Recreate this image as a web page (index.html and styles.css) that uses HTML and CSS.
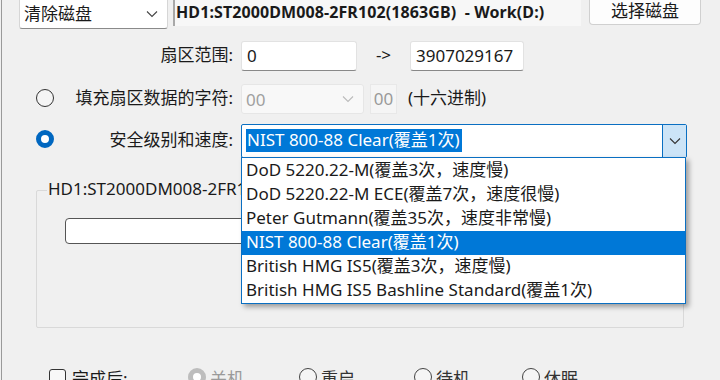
FILE: index.html
```html
<!DOCTYPE html>
<html lang="zh">
<head>
<meta charset="utf-8">
<link rel="stylesheet" href="styles.css">
</head>
<body>
<div class="win">
  <div class="row1">
    <div class="combo top-combo"><span>清除磁盘</span>
      <svg class="chev" width="12" height="8" viewBox="0 0 12 8"><polyline points="1,1.5 6,6.5 11,1.5" fill="none" stroke="#444" stroke-width="1.1"/></svg>
    </div>
    <div class="diskinfo">HD1:ST2000DM008-2FR102(1863GB) &nbsp;- Work(D:)</div>
    <div class="btn">选择磁盘</div>
  </div>

  <div class="row row2">
    <div class="lbl">扇区范围:</div>
    <div class="field f1">0</div>
    <div class="arrow">-&gt;</div>
    <div class="field f2">3907029167</div>
  </div>

  <div class="row row3">
    <div class="radio-cell"><span class="radio"></span></div>
    <div class="lbl lbl-narrow">填充扇区数据的字符:</div>
    <div class="combo dis-combo"><span>00</span>
      <svg class="chev" width="12" height="8" viewBox="0 0 12 8"><polyline points="1,1.5 6,6.5 11,1.5" fill="none" stroke="#bbb" stroke-width="1.1"/></svg>
    </div>
    <div class="dis-box">00</div>
    <div class="hex">(十六进制)</div>
  </div>

  <div class="row row4">
    <div class="radio-cell"><span class="radio on"></span></div>
    <div class="lbl lbl-narrow">安全级别和速度:</div>
    <div class="sel-combo">
      <div class="sel-text"><span class="hl">NIST 800-88 Clear(覆盖1次)</span></div>
      <div class="sel-btn">
        <svg width="12" height="8" viewBox="0 0 12 8"><polyline points="1,1.5 6,6.5 11,1.5" fill="none" stroke="#333" stroke-width="1.1"/></svg>
      </div>
    </div>
  </div>

  <div class="group">
    <div class="legend">HD1:ST2000DM008-2FR102(1863GB) - Work(D:)</div>
    <div class="progress"></div>
  </div>

  <div class="bottom">
    <span class="chk"></span><span class="done">完成后:</span>
    <span class="opt dis"><span class="radio small filled"></span>关机</span>
    <span class="opt"><span class="radio small"></span>重启</span>
    <span class="opt"><span class="radio small"></span>待机</span>
    <span class="opt"><span class="radio small"></span>休眠</span>
  </div>

  <ul class="dropdown">
    <li>DoD 5220.22-M(覆盖3次，速度慢)</li>
    <li>DoD 5220.22-M ECE(覆盖7次，速度很慢)</li>
    <li>Peter Gutmann(覆盖35次，速度非常慢)</li>
    <li class="cur">NIST 800-88 Clear(覆盖1次)</li>
    <li>British HMG IS5(覆盖3次，速度慢)</li>
    <li>British HMG IS5 Bashline Standard(覆盖1次)</li>
  </ul>
</div>
</body>
</html>
```

FILE: styles.css
```css
* { box-sizing: border-box; }
html, body { margin: 0; padding: 0; }
body {
  width: 720px; height: 380px; overflow: hidden;
  background: #f0f0f0;
  font-family: "Noto Sans", "Noto Sans CJK SC", sans-serif;
  font-size: 17px; color: #1a1a1a;
}
.win {
  position: relative;
  width: 720px; height: 380px;
  border-left: 1px solid #9a9a9a;
  margin-left: 1px;
}
.row1 { display: flex; align-items: flex-start; height: 29px; }
.combo {
  display: flex; align-items: center; justify-content: space-between;
  background: #fff; border: 1px solid #d6d6d6; border-bottom-color: #8a8a8a;
  border-radius: 0 0 3px 3px;
  padding: 0 9px 0 4px;
}
.top-combo { margin-left: 17px; width: 149px; height: 29px; border-top: none; }
.top-combo span { margin-top: -3px; }
.diskinfo {
  margin-left: 5px; width: 408px; height: 26px;
  background: #f7f7f7; border-left: 2px solid #a8a8a8;
  font-weight: bold; font-size: 16px; line-height: 25px; padding-left: 1px;
  white-space: nowrap; letter-spacing: 0.1px;
}
.btn {
  margin-left: 8px; width: 112px; height: 25px;
  background: #fdfdfd; border: 1px solid #d0d0d0; border-top: none;
  border-radius: 0 0 4px 4px; text-align: center; line-height: 22px;
}
.row { display: flex; align-items: center; }
.row2 { margin-top: 12px; height: 30px; }
.lbl { width: 231px; text-align: right; margin-top: -5px; white-space: nowrap; }
.field {
  background: #fff; height: 30px; border: 1px solid #e2e2e2; border-bottom-color: #888;
  border-radius: 3px; line-height: 27px; padding-left: 5px;
}
.f1 { margin-left: 8px; width: 116px; }
.arrow { width: 53px; text-align: center; margin-top: -3px; }
.f2 { width: 114px; }
.row3 { margin-top: 13px; height: 30px; }
.radio-cell { width: 73px; padding-left: 34px; display: flex; margin-top: -2px; }
.lbl-narrow { width: 158px; }
.radio {
  display: inline-block; width: 18px; height: 18px; border-radius: 50%;
  border: 1px solid #333; background: #f5f5f5; flex: none;
}
.radio.on { border: 5px solid #0067c0; background: #fff; }
.dis-combo {
  margin-left: 8px; width: 123px; height: 30px; background: #f8f8f8;
  border: 1px solid #e6e6e6; border-radius: 3px; color: #a0a0a0;
}
.dis-box {
  margin-left: 6px; width: 27px; height: 30px; background: #f5f5f5;
  border: 1px solid #e8e8e8; color: #9a9a9a; text-align: center; line-height: 27px;
}
.hex { margin-left: 11px; margin-top: -5px; }
.row4 { margin-top: 10px; height: 34px; }
.row4 .radio-cell { margin-top: -4px; }
.sel-combo {
  margin-left: 8px; width: 446px; height: 34px; display: flex;
  background: #fff; border: 1px solid #0a6fc2; border-radius: 2px;
}
.sel-text { flex: 1; padding: 3px 0 0 4px; }
.hl {
  display: inline-block; background: #0078d7; color: #fff;
  height: 23px; line-height: 21px; padding: 0 2px 0 1px; white-space: nowrap;
}
.sel-btn {
  width: 24px; background: #cce4f7; border-left: 1px solid #0a6fc2;
  display: flex; align-items: center; justify-content: center;
}
.group {
  margin: 32px 0 0 34px; width: 648px; height: 138px;
  border: 1px solid #d9d9d9; border-radius: 2px; position: relative;
  padding: 27px 28px 0 28px;
}
.legend {
  position: absolute; top: -13px; left: 10px; padding: 0 1px;
  background: #f0f0f0; white-space: nowrap; line-height: 22px;
}
.progress {
  height: 26px; background: #fff; border: 1px solid #555; border-radius: 4px;
}
.bottom {
  margin-top: 40px; padding-left: 47px; display: flex; align-items: center; height: 18px;
}
.chk { width: 17px; height: 17px; border: 1px solid #333; border-radius: 3px; background: #f8f8f8; flex: none; }
.done { margin-left: 6px; width: 116px; }
.opt { display: flex; align-items: center; gap: 4px; width: 111px; color: #333; }
.opt:nth-child(4) { width: 115px; }
.opt:nth-child(5) { width: 108px; }
.opt.dis { color: #9a9a9a; }
.radio.small { width: 18px; height: 18px; border-color: #444; }
.radio.filled { border: 5px solid #bdbdbd; background: #fff; }
.dropdown {
  position: absolute; left: 239px; top: 157px; width: 445px; height: 147px;
  margin: 0; padding: 1px 0 0 0; list-style: none;
  background: #fff; border: 1px solid #0a6fc2;
  box-shadow: 3px 3px 5px rgba(0,0,0,0.35);
}
.dropdown li { height: 24px; line-height: 22px; padding-left: 4px; white-space: nowrap; overflow: hidden; }
.dropdown li.cur { background: #0078d7; color: #fff; }
```
